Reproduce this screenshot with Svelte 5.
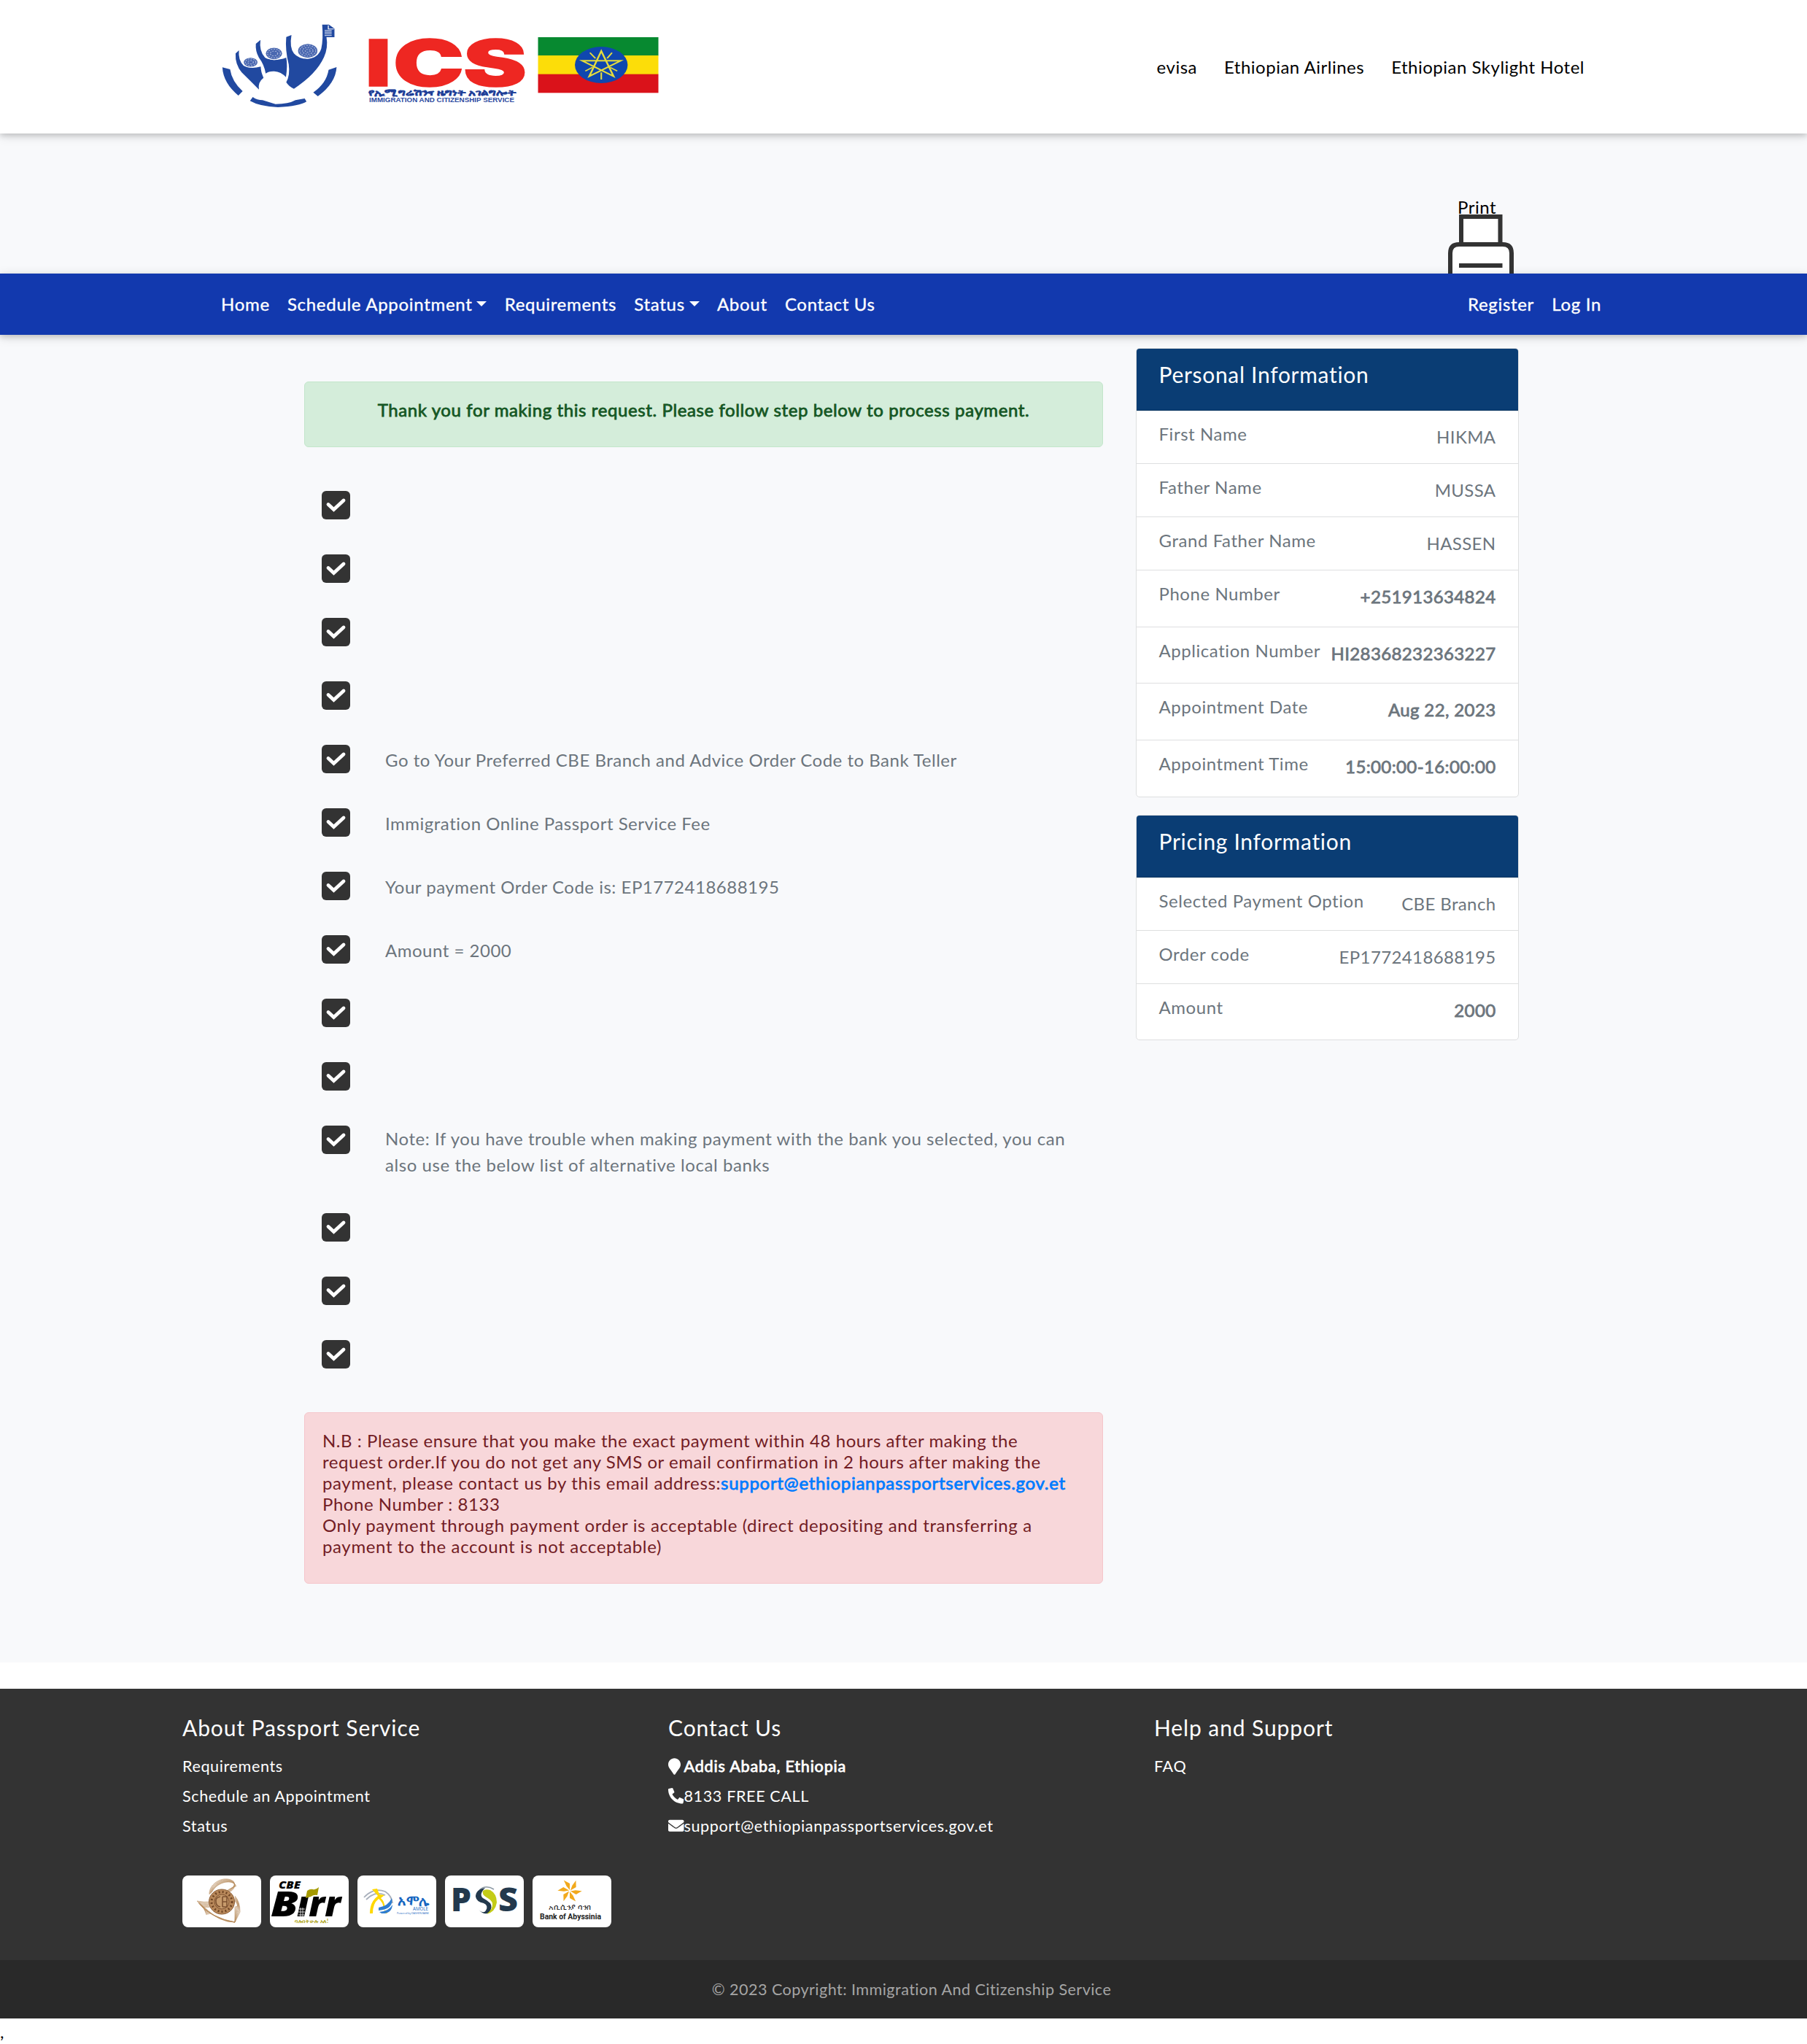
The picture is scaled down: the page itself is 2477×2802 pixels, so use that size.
<script>
  const topLinks = ['evisa', 'Ethiopian Airlines', 'Ethiopian Skylight Hotel'];
  const mainNav = [
    { label: 'Home' },
    { label: 'Schedule Appointment', menu: true },
    { label: 'Requirements' },
    { label: 'Status', menu: true },
    { label: 'About' },
    { label: 'Contact Us' }
  ];
  const steps = [
    '', '', '', '',
    'Go to Your Preferred CBE Branch and Advice Order Code to Bank Teller',
    'Immigration Online Passport Service Fee',
    'Your payment Order Code is: EP1772418688195',
    'Amount = 2000',
    '', '',
    'Note: If you have trouble when making payment with the bank you selected, you can also use the below list of alternative local banks',
    '', '', ''
  ];
  const cards = [
    {
      title: 'Personal Information',
      rows: [
        ['First Name', 'HIKMA'],
        ['Father Name', 'MUSSA'],
        ['Grand Father Name', 'HASSEN'],
        ['Phone Number', '+251913634824', true],
        ['Application Number', 'HI28368232363227', true],
        ['Appointment Date', 'Aug 22, 2023', true],
        ['Appointment Time', '15:00:00-16:00:00', true]
      ]
    },
    {
      title: 'Pricing Information',
      rows: [
        ['Selected Payment Option', 'CBE Branch'],
        ['Order code', 'EP1772418688195'],
        ['Amount', '2000', true]
      ]
    }
  ];
  const fan = [0, 1, 2, 3, 4, 5, 6, 7];
  const petals = [0, 60, 120, 180, 240, 300];
</script>

<header class="top">
  <svg class="logo" viewBox="0 0 660 173" width="660" height="173" role="img" aria-label="Immigration and Citizenship Service">
    <g transform="scale(.4209 .3333)">
      <g fill="#2149a0">
        <path d="M59 247L84 255Q90 305 125 345L111 363Q62 312 59 247Z" />
        <path d="M431 246L405 257Q398 312 355 350L370 366Q428 312 431 246Z" />
        <path d="M158 369Q172 382 190 382L232 398Q275 398 297 382L327 375L333 388Q310 407 240 411Q180 408 149 385Z" />
        <path d="M267 122L284 114Q277 165 292 190Q308 213 337 212Q371 208 381 170Q388 130 384 71L406 71L424 88V123L398 123Q404 165 390 205Q365 275 292 335Q275 325 267 308Q280 280 275 235Q263 175 267 122Z" />
        <path d="M168 150L183 134Q178 180 198 207Q225 226 267 207Q272 240 266 287Q250 265 228 263Q210 262 200 272Q195 235 178 207Q166 180 168 150Z" />
        <path d="M102 190L113 177Q110 218 128 240Q150 256 184 244Q184 265 193 290Q174 308 178 338Q150 303 122 268Q100 235 102 190Z" />
      </g>
      <g fill="#4a68b0" stroke="#fff" stroke-width="3">
        <ellipse cx="337" cy="179" rx="33" ry="30" />
        <ellipse cx="227" cy="190" rx="28" ry="25" />
        <ellipse cx="151" cy="226" rx="24" ry="20" />
      </g>
      <g fill="none" stroke="#a9b7dc" stroke-width="3" stroke-dasharray="5 4">
        <ellipse cx="337" cy="179" rx="26" ry="22" /><ellipse cx="337" cy="179" rx="17" ry="14" /><ellipse cx="337" cy="179" rx="8" ry="6" />
        <ellipse cx="227" cy="190" rx="21" ry="18" /><ellipse cx="227" cy="190" rx="12" ry="10" />
        <ellipse cx="151" cy="226" rx="17" ry="14" /><ellipse cx="151" cy="226" rx="9" ry="7" />
      </g>
      <path d="M392 95H415M392 102H415M392 109H415M392 116H415" stroke="#b9c6e4" stroke-width="4" />
      <path d="M404 74V89H422" fill="none" stroke="#fff" stroke-width="3" />
    </g>
    <g class="ics">
      <text x="221" y="107.500" textLength="35" lengthAdjust="spacingAndGlyphs">I</text>
      <text x="259" y="107.500" textLength="97" lengthAdjust="spacingAndGlyphs">C</text>
      <text x="355" y="107.500" textLength="87" lengthAdjust="spacingAndGlyphs">S</text>
    </g>
    <text class="amharic" x="225" y="120.500" textLength="202" lengthAdjust="spacingAndGlyphs">የኢሚግሬሽንና ዜግነት አገልግሎት</text>
    <text class="english" x="226" y="129.500" textLength="199" lengthAdjust="spacingAndGlyphs">IMMIGRATION AND CITIZENSHIP SERVICE</text>
    <g transform="scale(.4209 .3333)">
      <rect x="1087" y="123" width="392" height="76" fill="#078930" />
      <rect x="1087" y="198" width="392" height="78" fill="#fcdd09" />
      <rect x="1087" y="275" width="392" height="77" fill="#da121a" />
      <ellipse cx="1293" cy="237" rx="86" ry="75" fill="#0f47af" />
      <g fill="none" stroke="#e6dc3c" stroke-width="6">
        <path d="M1293 180L1333 284L1231 220H1356L1254 284Z" />
        <path d="M1312 210L1328 187M1274 210L1256 187M1322 247L1345 262M1264 247L1241 262M1293 268V297" stroke-width="5" />
      </g>
    </g>
  </svg>
  <nav class="top-links">
    {#each topLinks as link}<a href="#top">{link}</a>{/each}
  </nav>
</header>

<div class="print-strip">
  <a class="print" href="#print">
    <span>Print</span>
    <svg viewBox="0 0 90 98" width="90" height="98" fill="#fff" stroke="#333" stroke-width="6">
      <rect x="18" y="3" width="53.500" height="40" />
      <path d="M3 98V53Q3 41 15 41H75Q87 41 87 53V98Z" />
      <path d="M15 70H74.500" />
    </svg>
  </a>
</div>

<nav class="bar">
  <div class="bar-group">
    {#each mainNav as item}
      <a href="#nav" class:menu={item.menu}>{item.label}</a>
    {/each}
  </div>
  <div class="bar-group">
    <a href="#register">Register</a>
    <a href="#login">Log In</a>
  </div>
</nav>

<main>
  <section class="steps-col">
    <div class="alert success"><strong>Thank you for making this request. Please follow step below to process payment.</strong></div>
    <ul class="steps">
      {#each steps as step}
        <li class:long={step.length > 80}>
          <svg viewBox="0 0 39 39" width="39" height="39">
            <rect width="39" height="39" rx="6" fill="#333" />
            <path d="M9 18.500L16.500 25.500L30 13" fill="none" stroke="#fff" stroke-width="4.800" stroke-linecap="round" />
          </svg>
          <span>{step}</span>
        </li>
      {/each}
    </ul>
    <div class="alert danger">
      N.B : Please ensure that you make the exact payment within 48 hours after making the<br />
      request order.If you do not get any SMS or email confirmation in 2 hours after making the<br />
      <span>payment, please contact us by this email address:</span><strong>support@ethiopianpassportservices.gov.et</strong><br />
      Phone Number : 8133<br />
      <span>Only payment through payment order is acceptable (direct depositing and transferring a<br />
      payment to the account is not acceptable)</span>
    </div>
  </section>

  <aside>
    {#each cards as card}
      <div class="card">
        <h2>{card.title}</h2>
        {#each card.rows as [label, value, bold]}
          <div class="row" class:bold>
            <span>{label}</span>
            <span class="value">{value}</span>
          </div>
        {/each}
      </div>
    {/each}
  </aside>
</main>

<footer>
  <div class="columns">
    <div>
      <h3>About Passport Service</h3>
      <a href="#req">Requirements</a>
      <a href="#schedule">Schedule an Appointment</a>
      <a href="#status">Status</a>
    </div>
    <div>
      <h3>Contact Us</h3>
      <p>
        <svg class="pin" viewBox="0 0 384 512" width="17" height="23"><path d="M172.268 501.670C26.970 291.031 0 269.413 0 192 0 85.961 85.961 0 192 0s192 85.961 192 192c0 77.413-26.970 99.031-172.268 309.670-9.535 13.774-29.930 13.773-39.464 0z" /></svg>
        <strong>Addis Ababa, Ethiopia</strong>
      </p>
      <p>
        <svg class="phone" viewBox="0 0 512 512" width="21.500" height="21.500"><path d="M493.400 24.600l-104-24c-11.300-2.600-22.900 3.300-27.500 13.900l-48 112c-4.200 9.800-1.400 21.300 6.900 28l60.600 49.600c-36 76.700-98.900 140.500-177.200 177.200l-49.600-60.600c-6.800-8.300-18.200-11.100-28-6.900l-112 48C3.900 366.500-2 378.100.6 389.400l24 104C27.100 504.200 36.700 512 48 512c256.100 0 464-207.500 464-464 0-11.200-7.700-20.900-18.600-23.400z" /></svg>
        <span>8133 FREE CALL</span>
      </p>
      <p>
        <svg viewBox="0 0 512 512" width="21.500" height="21.500"><path d="M502.300 190.800c3.900-3.100 9.700-.2 9.700 4.700V400c0 26.500-21.500 48-48 48H48c-26.500 0-48-21.500-48-48V195.600c0-5 5.700-7.800 9.700-4.700 22.400 17.400 52.100 39.500 154.100 113.600 21.100 15.400 56.700 47.800 92.200 47.600 35.700.3 72-32.800 92.300-47.600 102-74.100 131.600-96.300 154-113.700zM256 320c23.200.4 56.600-29.200 73.400-41.400 132.700-96.300 142.800-104.700 173.400-128.700 5.800-4.500 9.200-11.500 9.200-18.900v-19c0-26.500-21.500-48-48-48H48c-26.500 0-48 21.500-48 48v19c0 7.400 3.400 14.300 9.200 18.900 30.600 23.900 40.700 32.400 173.400 128.700 16.800 12.200 50.200 41.800 73.400 41.400z" /></svg>
        <span>support@ethiopianpassportservices.gov.et</span>
      </p>
    </div>
    <div>
      <h3>Help and Support</h3>
      <a href="#faq">FAQ</a>
    </div>
  </div>

  <div class="banks">
    <!-- Commercial Bank of Ethiopia -->
    <svg viewBox="0 0 108 71">
      <g fill="none" stroke="#b98d5e" stroke-width=".6">
        {#each fan as i}
          <path d="M{37 + i * 0.500} {26 - i * 0.500}C{36 + i * 2} {10 - i * 0.600} {58 + i * 2} {-1 + i} {70 + i * 0.500} {8 + i}Q{75 - i} {16} {66 - i} 22" />
          <path d="M{40 - i} {52 + i * 0.300}L{20 + i * 1.300} {35 + i * 1.200}Q{30 + i} {37 + i} 38 {36 + i}" />
          <path d="M{22 + i} {38 + i}Q{40 + i * 2} {58 + i} 72 64L{79 - i} {50 - i}Q79 {36 + i} 72 {28 + i}" />
        {/each}
      </g>
      <ellipse cx="54" cy="36" rx="17.500" ry="17" fill="#b8885a" stroke="#8a5c34" />
      <ellipse cx="54" cy="36" rx="14" ry="13.500" fill="none" stroke="#6f4524" stroke-width="3" stroke-dasharray="2 3" />
      <ellipse cx="54" cy="36" rx="10" ry="10" fill="#c79b6c" stroke="#7e5230" />
      <path d="M52 29Q45 30 46 36Q46 42 52 43M55 29V43M55 29H61V43H55M55 36H61" fill="none" stroke="#7e5230" stroke-width="1.600" />
    </svg>
    <!-- CBE Birr -->
    <svg viewBox="0 0 108 71">
      <text class="cbe" x="12" y="18" textLength="30" lengthAdjust="spacingAndGlyphs">CBE</text>
      <text class="birr" x="1" y="56" textLength="38" lengthAdjust="spacingAndGlyphs">B</text>
      <text class="birr" x="37" y="56" textLength="60" lengthAdjust="spacingAndGlyphs">ırr</text>
      <path d="M49 31L51 21Q55 18 59 19T67 16L65 27Q60 26 56 29Z" fill="#a59a00" />
      <path d="M40 46H48M39 50H48M39 54H47M42 44V56M45 44V56" stroke="#fff" stroke-width=".8" />
      <text class="tag" x="34" y="65" textLength="46" lengthAdjust="spacingAndGlyphs">ባሉበት ሁሉ አለ!</text>
    </svg>
    <!-- Amole -->
    <svg viewBox="0 0 108 71">
      <path d="M9 30Q22 16 38 22Q47 28 48 38M12 33Q25 20 38 27" fill="none" stroke="#a9b0bc" stroke-width="1.800" />
      <path d="M20 19L27 18L30 26L37 27L32 31Q40 38 36 52H41L36 46Q35 36 29 32Q21 38 21 52H17Q17 36 28 28Z" fill="#ffd800" />
      <path d="M29 44Q42 42 47 31Q50 46 29 48ZM30 50Q43 49 48 40Q47 53 33 52Z" fill="#2f7dd1" />
      <text class="amole" x="55" y="41" textLength="43" lengthAdjust="spacingAndGlyphs">አሞሌ</text>
      <text class="amole-en" x="76" y="48" textLength="21" lengthAdjust="spacingAndGlyphs">AMOLE</text>
      <text class="amole-sub" x="54" y="53" textLength="44" lengthAdjust="spacingAndGlyphs">Powered by DASHEN BANK</text>
    </svg>
    <!-- POS -->
    <svg viewBox="0 0 108 71">
      <text class="pos" x="8" y="49" textLength="28" lengthAdjust="spacingAndGlyphs">P</text>
      <text class="pos" x="73" y="49" textLength="27" lengthAdjust="spacingAndGlyphs">S</text>
      <path d="M47 20Q56 12 67 19" fill="none" stroke="#8d9aa5" stroke-width="1.500" />
      <path d="M55 17Q42 19 42 29Q43 36 53 38Q60 41 56 48Q53 53 46 47Q54 55 60 51Q66 44 62 38Q58 34 52 31Q46 26 55 17Z" fill="#23394d" />
      <path d="M52 21Q55 18 62 20Q71 25 71 37Q69 50 57 53Q66 46 65 38Q63 33 57 30Q50 26 52 21Z" fill="#c4cc17" />
    </svg>
    <!-- Bank of Abyssinia -->
    <svg viewBox="0 0 108 71">
      <g fill="#f2a91c">
        {#each petals as angle}
          <path d="M51 20L46.500 14.500L42.800 6.500L51 11Z" transform="rotate({angle} 51 21)" />
        {/each}
      </g>
      <text class="aby-am" x="22" y="47" textLength="58" lengthAdjust="spacingAndGlyphs">አቢሲንያ ባንክ</text>
      <text class="aby-en" x="10" y="59.500" textLength="84" lengthAdjust="spacingAndGlyphs">Bank of Abyssinia</text>
    </svg>
  </div>

  <div class="copyright">© 2023 Copyright: Immigration And Citizenship Service</div>
</footer>
<div class="tail">,</div>

<style>
  :global(body) {
    margin: 0;
    background: #fff;
    color: #000;
    font: 400 24px/36px Lato, "Open Sans", sans-serif;
    letter-spacing: 0.5px;
  }
  a { color: inherit; text-decoration: none; }
  /* The regular face thickened, keeping its widths */
  strong, .bold .value { font-weight: 400; -webkit-text-stroke: 0.8px currentColor; }

  .top, .bar {
    position: relative;
    display: flex;
    justify-content: space-between;
    box-sizing: border-box;
    box-shadow: 0 3px 7.5px rgba(0, 0, 0, 0.16), 0 3px 15px rgba(0, 0, 0, 0.12);
  }
  .top { height: 183px; padding: 10px 305px 0 280px; background: #fff; }
  .logo { display: block; }
  .ics { fill: #ee2722; stroke: #ee2722; stroke-width: 1.5px; font: 900 88px Inter, sans-serif; letter-spacing: 0; }
  .amharic { fill: #1f3f98; stroke: #1f3f98; stroke-width: 0.4px; font: 700 12px Lato, sans-serif; letter-spacing: 0; }
  .english { fill: #2c4aa0; font: 700 9px "Liberation Sans", sans-serif; letter-spacing: 0; }
  .top-links { display: flex; gap: 37px; padding-top: 64px; }

  .print-strip {
    display: flex;
    justify-content: flex-end;
    box-sizing: border-box;
    height: 192px;
    padding-right: 402px;
    overflow: hidden;
    background: #f8f9fb;
  }
  .print { display: flex; flex-direction: column; padding-top: 83px; }
  .print span { flex: none; padding-left: 13px; height: 28px; }
  .print svg { display: block; flex: none; }

  .bar { height: 84px; padding: 24px 282px 0 303px; background: #1239ae; color: #fff; letter-spacing: 0.7px; }
  .bar-group { display: flex; gap: 24.2px; }
  .bar a { -webkit-text-stroke: 0.35px currentColor; }
  .menu { display: flex; }
  .menu::after {
    content: "";
    margin: 14px 0 0 6px;
    border: 7px solid transparent;
    border-top-color: #fff;
    border-bottom: 0;
    height: 0;
  }

  main {
    display: flex;
    gap: 44.5px;
    box-sizing: border-box;
    height: 1820px;
    padding-left: 417px;
    background: #f8f9fb;
  }
  .steps-col { width: 1095px; padding-top: 64px; }
  .alert { box-sizing: border-box; border: 1px solid; border-radius: 6px; white-space: nowrap; }
  .success { height: 90px; padding-top: 20px; text-align: center; background: #d4edda; border-color: #c3e6cb; color: #155724; letter-spacing: 0.6px; }
  .danger {
    height: 235px;
    margin-top: 12px;
    padding: 24px 24px 0;
    background: #f8d7da;
    border-color: #f5c6cb;
    color: #721c24;
    line-height: 28.9px;
    letter-spacing: 0.54px;
  }
  .danger span { letter-spacing: 0.64px; }
  .danger strong { color: #007bff; letter-spacing: 0.7px; }

  .steps { margin: 0; padding: 60px 0 0 24px; list-style: none; }
  .steps li { display: flex; gap: 48px; height: 87px; color: #6c757d; }
  .steps span { width: 945px; padding-top: 2.5px; letter-spacing: 0.51px; }
  .steps li.long { height: 120px; }
  .steps .long span { padding-top: 0; letter-spacing: 0.57px; }

  aside { display: flex; flex-direction: column; gap: 24px; width: 525.5px; padding-top: 18px; }
  .card { box-sizing: border-box; background: #fff; border: 1px solid #dedfe0; border-radius: 5px; overflow: hidden; }
  .card h2 {
    box-sizing: border-box;
    height: 86px;
    margin: -1px -1px 0;
    padding: 18px 32px 0;
    background: #0a3d74;
    border-bottom: 1px solid #08345f;
    color: #fff;
    font-size: 30px;
    font-weight: 400;
    letter-spacing: 0.7px;
  }
  .row {
    display: flex;
    justify-content: space-between;
    box-sizing: border-box;
    height: 73px;
    padding: 14px 30.5px 0 31px;
    border-bottom: 1px solid #dedfe0;
    color: #6c757d;
    letter-spacing: 0.56px;
  }
  .row.bold { height: 77.7px; }
  .row:last-child { height: 76.7px; border-bottom: 0; }
  .value { padding-top: 4px; letter-spacing: 0.38px; }

  footer { margin-top: 36px; background: #333; color: #fff; font-size: 21.6px; letter-spacing: 0.6px; }
  .columns { display: grid; grid-template-columns: 666px 666px auto; height: 256px; padding-left: 250px; box-sizing: border-box; padding-top: 35px; }
  h3 { margin: 0 0 14.5px; font-size: 30px; font-weight: 400; line-height: 36px; letter-spacing: 0.9px; }
  .columns a, .columns p { display: flex; align-items: center; height: 41px; margin: 0; line-height: 32.4px; }
  .columns p svg { fill: #fff; }
  .columns .pin { margin-right: 4.5px; }
  .columns .phone { transform: scaleX(-1); }
  .columns p strong { letter-spacing: 0.8px; }

  .banks { display: flex; gap: 12px; height: 116px; padding-left: 250px; }
  .banks svg { width: 108px; height: 71px; border-radius: 8px; background: #fff; }
  .banks text { letter-spacing: 0; }
  .cbe { font: italic 800 13.5px "Open Sans", sans-serif; }
  .birr { font: italic 800 48px "Open Sans", sans-serif; }
  .tag { fill: #a59a00; font: 700 6.5px Lato, sans-serif; }
  .amole { fill: #1565c0; font: 700 18px Lato, sans-serif; }
  .amole-en { fill: #1565c0; font: 400 8px "Open Sans", sans-serif; }
  .amole-sub { fill: #1565c0; font: 400 4px "Open Sans", sans-serif; }
  .pos { fill: #23394d; font: 800 45px "Open Sans", sans-serif; }
  .aby-am { fill: #222; font: 400 10px Lato, sans-serif; }
  .aby-en { fill: #222; font: 700 10.5px Roboto, sans-serif; }

  .copyright { height: 80px; box-sizing: border-box; padding: 24px 0 0 22px; background: #292929; color: #a5a5a5; text-align: center; line-height: 32.4px; letter-spacing: 0.44px; }
  .tail { height: 35px; overflow: hidden; }
</style>
